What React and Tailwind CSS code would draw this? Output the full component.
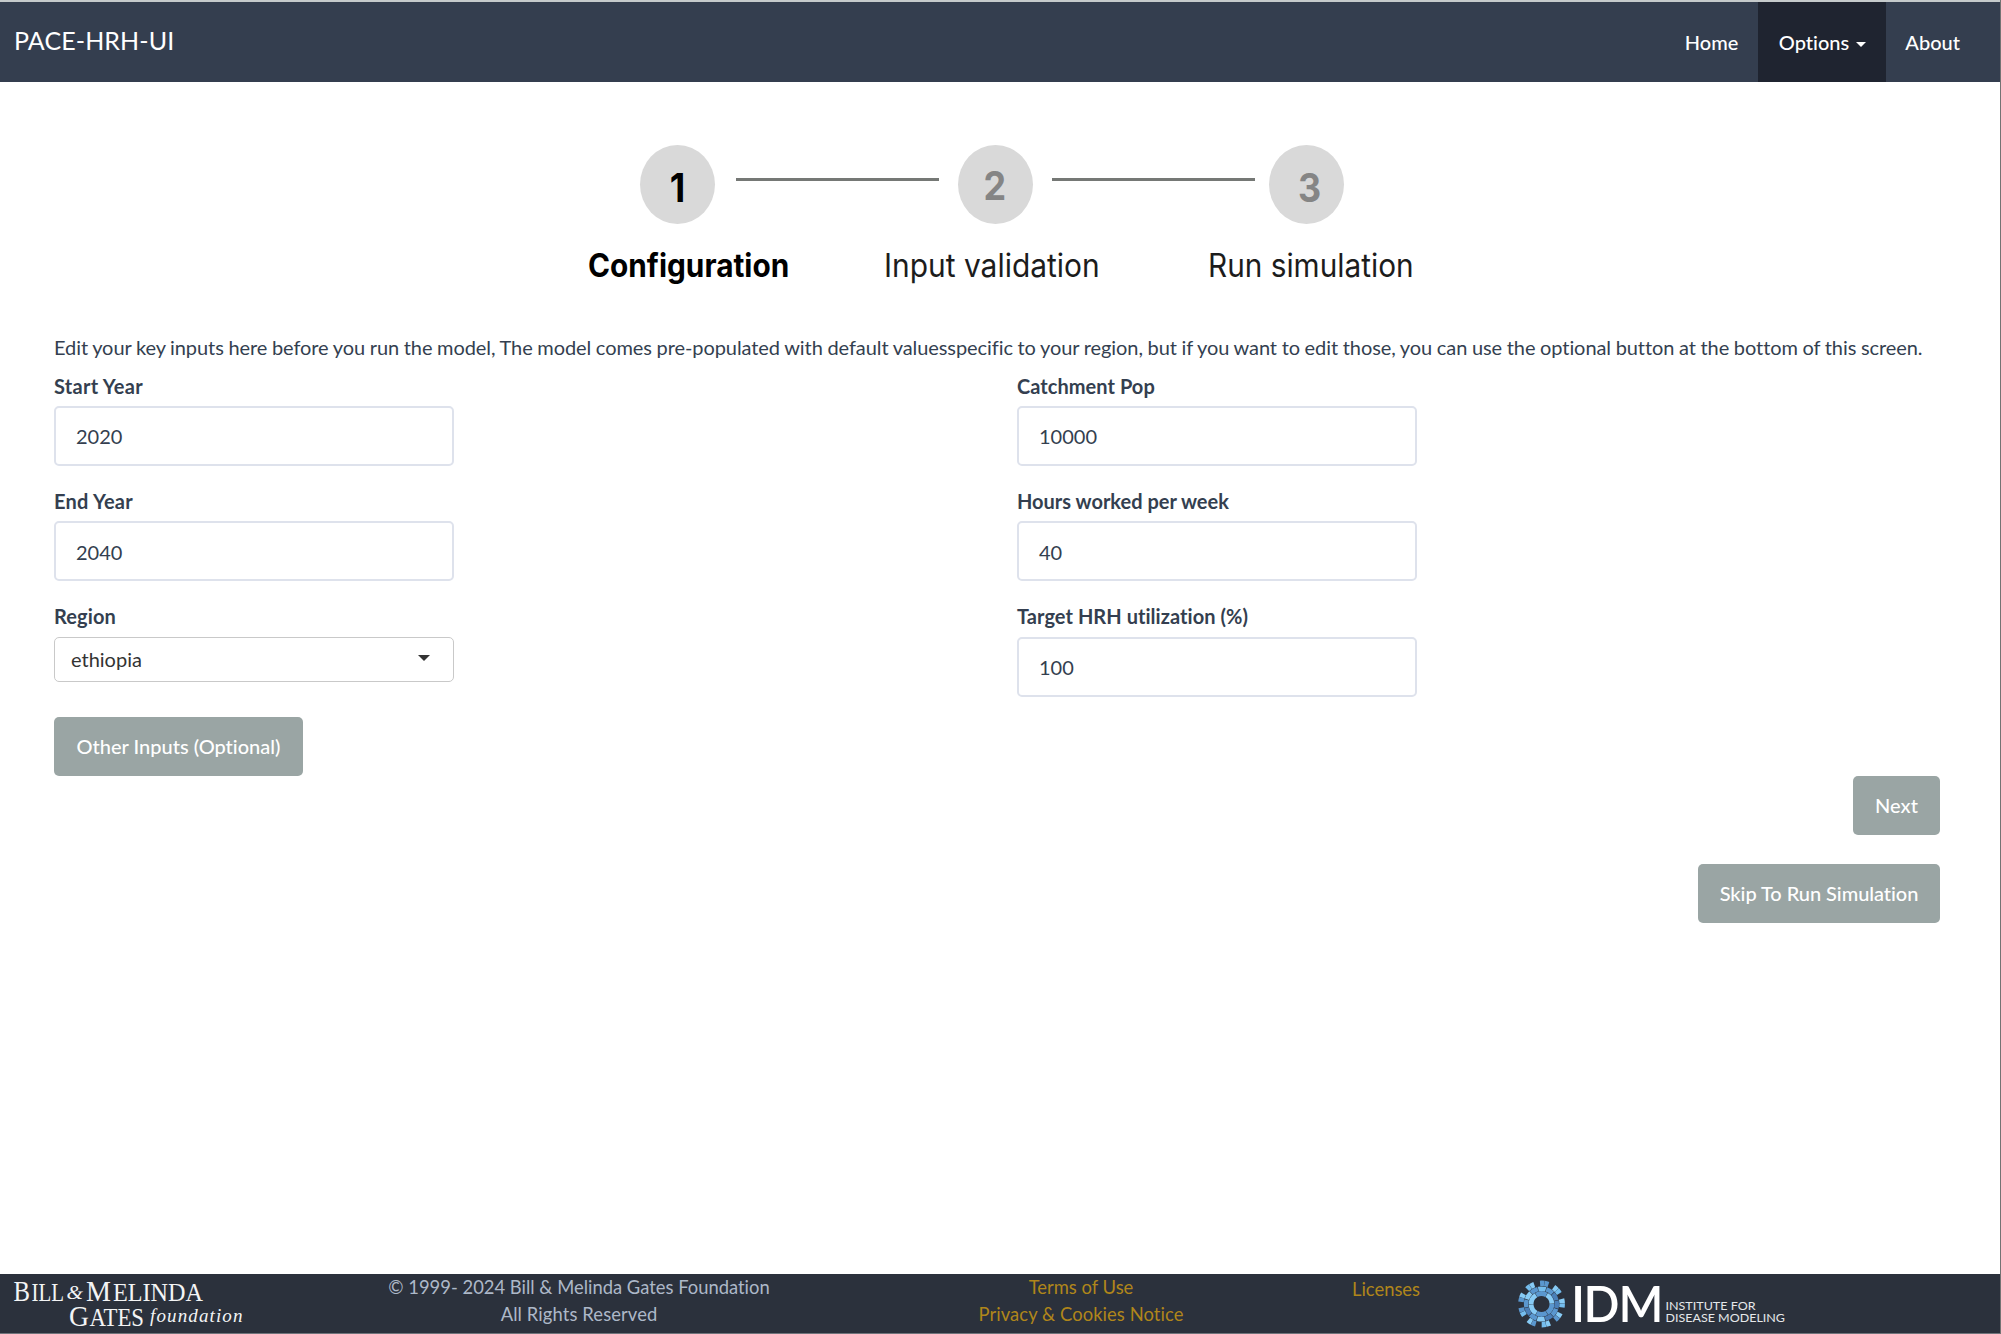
const INTRO =
  "Edit your key inputs here before you run the model, The model comes pre-populated with default valuesspecific to your region, but if you want to edit those, you can use the optional button at the bottom of this screen.";

function Caret({ className }) {
  return (
    <svg viewBox="0 0 12 6" className={className} fill="currentColor" preserveAspectRatio="none">
      <path d="M0 0H12L6 6Z" />
    </svg>
  );
}

function Header() {
  return (
    <header className="flex h-[82px] justify-between border-t-2 border-[#c5cacb] bg-[#343e4f] pl-[14px] pr-[24px] text-white">
      <span className="pt-[23px] text-[25px] leading-[30px] tracking-[0.1px]">PACE-HRH-UI</span>
      <nav className="flex text-[20px] font-medium leading-[80px]">
        <a className="pr-[20px]">Home</a>
        <a className="flex w-[128px] items-center gap-[7px] bg-[#1f2430] pl-[20.5px]">
          <span>Options</span>
          <Caret className="mt-[5px] h-[5px] w-[10px]" />
        </a>
        <a className="pl-[19px] pr-[16px]">About</a>
      </nav>
    </header>
  );
}

function Dot({ className, n, numClass }) {
  return (
    <div className={"flex h-[79px] w-[75px] items-center justify-center rounded-[50%] bg-[#d9d9d9] " + className}>
      <span className={"scale-x-[0.92] text-[39px] font-bold leading-[40px] " + numClass}>{n}</span>
    </div>
  );
}

function Stepper() {
  return (
    <div className="pt-[62.5px] font-['Inter']">
      <div className="flex items-start pl-[640px]">
        <Dot n="1" className="text-black" numClass="translate-y-[4px]" />
        <div className="ml-[20.5px] mt-[33px] h-[3px] w-[203px] bg-[#757875]" />
        <Dot n="2" className="ml-[19.5px] text-[#858585]" numClass="translate-x-[-0.5px] translate-y-[2px]" />
        <div className="ml-[19px] mt-[33px] h-[3px] w-[203px] bg-[#757875]" />
        <Dot n="3" className="ml-[13.5px] text-[#858585]" numClass="translate-x-[4px] translate-y-[4px]" />
      </div>
      <div className="mt-[22px] flex whitespace-nowrap pl-[588px] text-[32px] leading-[40px] text-[#1c1c1c]">
        <span className="w-[296px] origin-left scale-x-[0.931] font-bold text-black">Configuration</span>
        <span className="w-[324px] origin-left scale-x-[0.935]">Input validation</span>
        <span className="origin-left scale-x-[0.93]">Run simulation</span>
      </div>
    </div>
  );
}

function Label({ children, className = "" }) {
  return <div className={"mb-[5.4px] leading-[30px] font-bold " + className}>{children}</div>;
}

function Field({ label, value, labelClass }) {
  return (
    <div className="mb-[20px] w-[400px]">
      <Label className={labelClass}>{label}</Label>
      <div className="flex h-[60px] items-center rounded-[5px] border-2 border-[#dee2ec] pl-[20px] pt-px">{value}</div>
    </div>
  );
}

function Btn({ className, children }) {
  return (
    <button className={"h-[59px] rounded-[5px] bg-[#9aa5a4] text-center text-[20px] font-medium text-white " + className}>
      {children}
    </button>
  );
}

function GatesLogo() {
  return (
    <svg width="240" height="58" viewBox="0 0 240 58" fill="#f3f4f5" fontFamily="'Liberation Serif', serif" className="shrink-0">
      <text x="4.5" y="27" fontSize="30" textLength="16.5" lengthAdjust="spacingAndGlyphs">B</text>
      <text x="22.5" y="27" fontSize="26" textLength="32.5" lengthAdjust="spacingAndGlyphs">ILL</text>
      <text x="57.5" y="25" fontSize="19" fontStyle="italic" textLength="16.5" lengthAdjust="spacingAndGlyphs">&amp;</text>
      <text x="77" y="27" fontSize="30" textLength="25" lengthAdjust="spacingAndGlyphs">M</text>
      <text x="104" y="27" fontSize="26" textLength="90" lengthAdjust="spacingAndGlyphs">ELINDA</text>
      <text x="60" y="52" fontSize="30" textLength="20" lengthAdjust="spacingAndGlyphs">G</text>
      <text x="80.5" y="52" fontSize="26" textLength="54.5" lengthAdjust="spacingAndGlyphs">ATES</text>
      <text x="141" y="48" fontSize="19" fontStyle="italic" textLength="92.5">foundation</text>
    </svg>
  );
}

const BLUES = ["#4a7fb8", "#74bdee", "#5a97cf", "#87cbf5"];
function arc(r0, r1, a0, a1) {
  const p = (r, a) =>
    `${(23.5 + r * Math.cos((a * Math.PI) / 180)).toFixed(2)} ${(23.5 + r * Math.sin((a * Math.PI) / 180)).toFixed(2)}`;
  return `M${p(r0, a0)}L${p(r1, a0)}A${r1} ${r1} 0 0 1 ${p(r1, a1)}L${p(r0, a1)}A${r0} ${r0} 0 0 0 ${p(r0, a0)}Z`;
}
const INNER = [2, 2, 3, 3, 2, 3].map((c, i) => [arc(8, 12.8, i * 60, i * 60 + 58), c]);
const MIDDLE = [0, 2, 0, 3, 2, 0, 2, 3, 2, 1, 2, 0].map((c, i) => [arc(13.1, 17.6, i * 30 - 12, i * 30 + 16), c]);
const OUTER = [3, 1, 3, 2, 3, 1, 2, 3, 1, 2, 2, 3, 1, 3, 2, 2, 3, 1].map((c, i) => {
  const a = Math.floor(i / 2) * 40 + (i % 2) * 12 - 14;
  return [arc(17.9, 23.4, a, a + 11.5), c];
});

function IdmLogo() {
  return (
    <svg width="270" height="58" viewBox="0 0 270 58" fill="#fff" fontFamily="Lato, sans-serif" className="shrink-0">
      <g transform="translate(0 6.5)">
        {[...INNER, ...MIDDLE, ...OUTER].map(([d, c], i) => (
          <path key={i} d={d} fill={BLUES[c]} />
        ))}
      </g>
      <g fontSize="49" fontWeight="600">
        <text x="53" y="47.5">I</text>
        <text x="65.5" y="47.5" textLength="36" lengthAdjust="spacingAndGlyphs">D</text>
        <text x="100.5" y="47.5" textLength="45" lengthAdjust="spacingAndGlyphs">M</text>
      </g>
      <g fontSize="12" fill="#e6e8ea">
        <text x="147.5" y="35.5" textLength="90" lengthAdjust="spacingAndGlyphs">INSTITUTE FOR</text>
        <text x="147.5" y="47.5" textLength="119.5" lengthAdjust="spacingAndGlyphs">DISEASE MODELING</text>
      </g>
    </svg>
  );
}

function Footer() {
  return (
    <footer className="flex h-[60px] whitespace-nowrap border-b border-[#6f747b] bg-[#2b313c] pl-[9px] text-[18.4px] leading-[27px]">
      <GatesLogo />
      <div className="ml-[100px] w-[460px] text-center text-[#adb8c8]">
        <div>© 1999- 2024 Bill &amp; Melinda Gates Foundation</div>
        <div className="tracking-[0.1px]">All Rights Reserved</div>
      </div>
      <div className="ml-[122px] w-[300px] text-center text-[#b0861a]">
        <div>Terms of Use</div>
        <div className="tracking-[0.07px]">Privacy &amp; Cookies Notice</div>
      </div>
      <div className="ml-[105px] w-[100px] pt-[2px] text-center text-[#b0861a]">Licenses</div>
      <div className="ml-[82px]">
        <IdmLogo />
      </div>
    </footer>
  );
}

export default function App() {
  return (
    <div className="flex h-[1334px] w-[2001px] flex-col border-r border-[#737373] bg-white font-['Lato',sans-serif] text-[20px] text-[#343f50] [font-variant-ligatures:none]">
      <Header />
      <Stepper />
      <main className="flex flex-1 flex-col pl-[54px]">
        <p className="mt-[46px] whitespace-nowrap leading-[30px] tracking-[-0.075px] [word-spacing:-0.38px]">{INTRO}</p>
        <div className="mt-[9px] flex gap-[563px]">
          <div>
            <Field label="Start Year" value="2020" labelClass="tracking-[0.3px]" />
            <Field label="End Year" value="2040" labelClass="tracking-[0.25px]" />
            <div className="w-[400px]">
              <Label className="tracking-[0.1px]">Region</Label>
              <div className="flex h-[45px] items-center justify-between rounded-[5px] border border-[#c9c9c9] pl-[16px] pr-[23px] text-[#333]">
                <span>ethiopia</span>
                <Caret className="mt-[-3px] h-[6px] w-[12px]" />
              </div>
            </div>
            <Btn className="mt-[35px] w-[249px]">Other Inputs (Optional)</Btn>
          </div>
          <div>
            <Field label="Catchment Pop" value="10000" labelClass="tracking-[0.05px]" />
            <Field label="Hours worked per week" value="40" />
            <Field label="Target HRH utilization (%)" value="100" labelClass="tracking-[0.05px]" />
          </div>
        </div>
        <div className="flex w-[1886px] flex-col items-end gap-[29px]">
          <Btn className="w-[87px]">Next</Btn>
          <Btn className="w-[242px] tracking-[-0.05px]">Skip To Run Simulation</Btn>
        </div>
      </main>
      <Footer />
    </div>
  );
}
